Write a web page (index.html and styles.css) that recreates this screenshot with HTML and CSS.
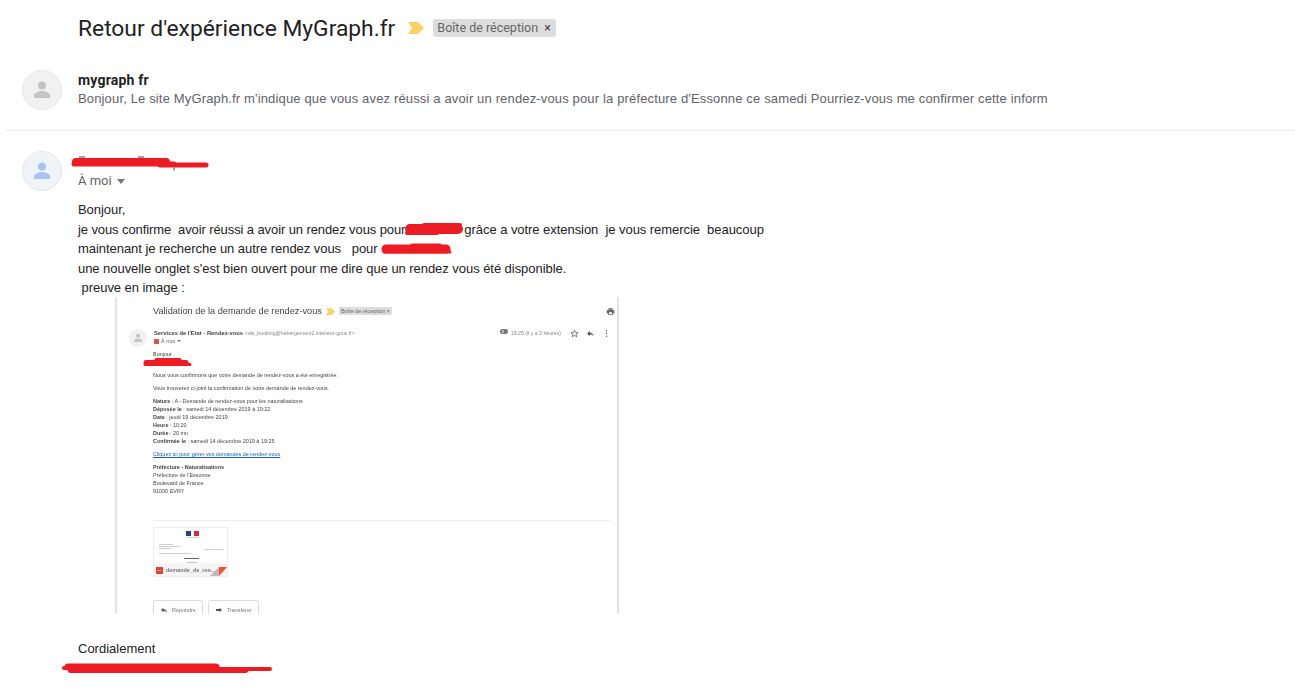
FILE: index.html
```html
<!DOCTYPE html>
<html lang="fr">
<head>
    <meta charset="UTF-8">
    <title>Retour d'expérience MyGraph.fr</title>
    <link rel="stylesheet" href="styles.css">
</head>
<body>
    <div class="subject">
        <h1>Retour d'expérience MyGraph.fr</h1>
        <svg class="marker" width="16" height="12" viewBox="0 0 16 12"><path d="M0 0h10l6 6-6 6H0l4-6z"/></svg>
        <span class="chip">Boîte de réception <b>×</b></span>
    </div>

    <div class="msg-row collapsed">
        <div class="avatar">
            <svg width="20" height="20" viewBox="0 0 20 20"><circle cx="10" cy="5.5" r="4"/><path d="M2 18v-2.500c0-3 5-4.500 8-4.500s8 1.500 8 4.500V18z"/></svg>
        </div>
        <div class="msg-head">
            <div class="sender">mygraph fr</div>
            <div class="snippet">Bonjour, Le site MyGraph.fr m'indique que vous avez réussi a avoir un rendez-vous pour la préfecture d'Essonne ce samedi Pourriez-vous me confirmer cette inform</div>
        </div>
    </div>

    <div class="msg-row open">
        <div class="avatar blue">
            <svg width="20" height="20" viewBox="0 0 20 20"><circle cx="10" cy="5.500" r="4"/><path d="M2 18v-2.500c0-3 5-4.500 8-4.500s8 1.500 8 4.500V18z"/></svg>
        </div>
        <div class="msg-head">
            <div class="sender">&nbsp;</div>
            <div class="to">À moi <i class="caret"></i></div>
        </div>
    </div>

    <div class="msg-body">
        <div class="line">Bonjour,</div>
        <div class="line"><span class="tight">je vous confirme  avoir réussi a avoir un rendez vous pour</span><span class="gap gap-a"></span>grâce a votre extension  je vous remercie  beaucoup</div>
        <div class="line">maintenant je recherche un autre rendez vous   pour <span class="gap gap-b"></span></div>
        <div class="line">une nouvelle onglet s'est bien ouvert pour me dire que un rendez vous été disponible.</div>
        <div class="line"> preuve en image :</div>
    </div>

    <div class="shot">
        <div class="shot-title">
            <h2>Validation de la demande de rendez-vous</h2>
            <svg width="9" height="7" viewBox="0 0 16 12" class="marker"><path d="M0 0h10l6 6-6 6H0l4-6z"/></svg>
            <span class="shot-chip">Boîte de réception ×</span>
            <svg class="print" width="9" height="9" viewBox="0 0 24 24"><path d="M19 8H5a3 3 0 0 0-3 3v6h4v4h12v-4h4v-6a3 3 0 0 0-3-3zm-3 11H8v-5h8zM18 3H6v4h12z"/></svg>
        </div>
        <div class="shot-head">
            <div class="shot-avatar">
                <svg width="10" height="10" viewBox="0 0 20 20"><circle cx="10" cy="5.500" r="4"/><path d="M2 18v-2.500c0-3 5-4.500 8-4.500s8 1.500 8 4.500V18z"/></svg>
            </div>
            <div class="shot-who">
                <div><b class="shot-sender">Services de l'Etat - Rendez-vous</b> <span class="grey">&lt;ide_booking@hebergement2.interieur-gouv.fr&gt;</span></div>
                <div class="shot-to"><i class="flag"></i>À moi <i class="caret small"></i></div>
            </div>
            <div class="shot-meta">
                <svg width="8" height="5" viewBox="0 0 16 10"><rect width="16" height="10" rx="5" fill="#777"/><rect x="5" y="2" width="2" height="6" fill="#fff"/></svg>
                <span class="grey">19:25 (il y a 3 heures)</span>
                <svg width="9" height="9" viewBox="0 0 24 24" class="star"><path d="M12 3l2.700 6.300 6.800.6-5.200 4.500 1.600 6.700L12 17l-5.900 3.600 1.600-6.700L2.500 9.900l6.800-.6z"/></svg>
                <svg width="9" height="9" viewBox="0 0 24 24"><path d="M10 9V5l-7 7 7 7v-4.100c5 0 8.500 1.600 11 5.100-1-5-4-10-11-11z"/></svg>
                <svg width="9" height="9" viewBox="0 0 24 24"><circle cx="12" cy="5" r="2"/><circle cx="12" cy="12" r="2"/><circle cx="12" cy="19" r="2"/></svg>
            </div>
        </div>
        <div class="shot-text">
            <div>Bonjour</div>
            <div class="shot-blank">&nbsp;</div>
            <p>Nous vous confirmons que votre demande de rendez-vous a été enregistrée.</p>
            <p>Vous trouverez ci-joint la confirmation de votre demande de rendez-vous.</p>
            <p><b>Nature</b> : A - Demande de rendez-vous pour les naturalisations<br>
            <b>Déposée le</b> : samedi 14 décembre 2019 à 19:22<br>
            <b>Date</b> : jeudi 19 décembre 2019<br>
            <b>Heure</b> : 10:20<br>
            <b>Durée</b> : 20 mn<br>
            <b>Confirmée le</b> : samedi 14 décembre 2019 à 19:25</p>
            <p><a href="#">Cliquez ici pour gérer vos demandes de rendez-vous</a></p>
            <p><b>Préfecture - Naturalisations</b><br>
            Préfecture de l'Essonne<br>
            Boulevard de France<br>
            91000 EVRY</p>
        </div>
        <div class="shot-line"></div>
        <div class="attachment">
            <svg class="doc" width="73" height="35" viewBox="0 0 73 35">
                <rect x="32" y="3" width="5" height="5" fill="#22408f"/>
                <rect x="40" y="3" width="5" height="5" fill="#e0243a"/>
                <g fill="#bbb">
                    <rect x="33" y="9" width="12" height=".7"/>
                    <rect x="5" y="16" width="14" height=".7"/>
                    <rect x="5" y="18" width="21" height=".7"/>
                    <rect x="5" y="20" width="12" height=".7"/>
                    <rect x="50" y="21" width="19" height=".7"/>
                    <rect x="5" y="25" width="32" height=".7"/>
                </g>
                <rect x="30" y="30" width="15" height="1" fill="#666"/>
                <rect x="33" y="34" width="10" height=".7" fill="#aaa"/>
            </svg>
            <div class="att-name"><span class="pdf">PDF</span><span>demande_de_ren...</span></div>
            <svg class="fold" width="17" height="10" viewBox="0 0 17 10"><path d="M0 10l9-9v9z" fill="#bbb"/><path d="M9 1h8l-8 9z" fill="#f4532a"/></svg>
        </div>
        <div class="shot-buttons">
            <span class="shot-btn"><svg width="8" height="8" viewBox="0 0 24 24"><path d="M10 9V5l-7 7 7 7v-4.100c5 0 8.500 1.600 11 5.100-1-5-4-10-11-11z"/></svg>Répondre</span>
            <span class="shot-btn"><svg width="8" height="8" viewBox="0 0 24 24"><path d="M14 9V5l7 7-7 7v-4H3V9z"/></svg>Transférer</span>
        </div>
    </div>

    <div class="closing">Cordialement</div>

    <svg class="scribbles" width="1295" height="688" viewBox="0 0 1295 688">
        <g class="peek">
            <path d="M79 157h6M138 157h6M174 170.500v-3"/>
        </g>
        <g class="red">
            <path stroke-width="8" d="M76 162h90"/>
            <path stroke-width="5" d="M74 164h100"/>
            <path stroke-width="5" d="M160 165h46"/>
            <path stroke-width="10" d="M410 229h48"/>
            <path stroke-width="4" d="M407 233h30M424 225h36"/>
            <path stroke-width="9" d="M386 249h60"/>
            <path stroke-width="3" d="M384 252h66M412 245h28"/>
            <path stroke-width="5" d="M146 362.500h40"/>
            <path stroke-width="3" d="M145 364.500h45M156 359.500h24"/>
            <path stroke-width="7" d="M68 667h148"/>
            <path stroke-width="4" d="M64 668h120M70 671h176M180 669h90"/>
        </g>
    </svg>
</body>
</html>
```

FILE: styles.css
```css
* {
    box-sizing: border-box;
}
html, body {
    height: 100%;
}
body {
    margin: 0;
    overflow: hidden;
    position: relative;
    background: white;
    color: #222;
    font-family: "Liberation Sans", Arial, sans-serif;
    font-size: 13px;
}
.subject {
    display: flex;
    align-items: center;
    height: 56px;
    padding-left: 78px;
}
.subject h1 {
    margin: 0;
    font-family: Roboto, sans-serif;
    font-size: 22.800px;
    font-weight: 400;
    color: #222;
}
.marker {
    margin-left: 13px;
    fill: #fad165;
}
.chip {
    margin-left: 9px;
    padding: 0 5px 0 4px;
    height: 18px;
    line-height: 18px;
    border-radius: 3px;
    background: #ddd;
    color: #666;
    font-family: Roboto, sans-serif;
    font-size: 12.500px;
}
.chip b {
    margin-left: 3px;
    font-weight: 400;
    color: #444;
}
.msg-row {
    display: flex;
    padding-left: 22px;
}
.msg-row.collapsed {
    height: 75px;
    margin-left: 6px;
    padding-left: 16px;
    padding-top: 14px;
    border-bottom: 1px solid #e8e8e8;
}
.msg-row.open {
    padding-top: 20px;
    height: 66px;
}
.avatar {
    display: flex;
    align-items: center;
    justify-content: center;
    width: 40px;
    height: 40px;
    border-radius: 50%;
    background: #f1f1f1;
    border: 1px solid #e6e6e6;
    fill: #c4c4c4;
}
.avatar.blue {
    background: #f0f3f8;
    fill: #a9c4f0;
}
.msg-head {
    margin-left: 16px;
}
.sender {
    font-family: Roboto, sans-serif;
    font-weight: 700;
    font-size: 14px;
    letter-spacing: .2px;
    line-height: 20px;
}
.snippet, .to {
    line-height: 18px;
    color: #5f6368;
}
.snippet {
    letter-spacing: .15px;
}
.to {
    margin-top: 1px;
    font-family: Roboto, sans-serif;
    font-size: 13px;
    display: flex;
    align-items: center;
    gap: 5px;
}
.caret {
    width: 0;
    height: 0;
    border: 4.500px solid transparent;
    border-top: 5px solid #777;
    border-bottom: 0;
}
.msg-body {
    margin-left: 78px;
    line-height: 19.500px;
    height: 100px;
    padding-top: 3px;
    letter-spacing: -.05px;
}
.line {
    white-space: pre-wrap;
}
.tight {
    letter-spacing: -.1px;
}
.gap {
    display: inline-block;
}
.gap-a {
    width: 59px;
}
.gap-b {
    width: 70px;
}

/* la capture dans le message */
.shot {
    width: 504px;
    height: 317px;
    margin-left: 115px;
    padding: 0 0 0 36px;
    border-left: 2px solid #e4e4e4;
    border-right: 2px solid #e4e4e4;
    overflow: hidden;
    font-size: 5.450px;
    line-height: 8px;
    color: #444;
    filter: blur(.35px);
}
.shot-title {
    display: flex;
    align-items: center;
    height: 28px;
    padding-right: 2px;
}
.shot-title h2 {
    margin: 0;
    font-size: 9.200px;
    font-weight: 400;
    color: #444;
}
.shot-title .marker {
    margin-left: 4px;
}
.shot-chip {
    margin-left: 4px;
    padding: 0 2px;
    background: #ddd;
    color: #666;
    border-radius: 1px;
}
.print {
    margin-left: auto;
    fill: #666;
}
.shot-head {
    display: flex;
    height: 22px;
    margin-left: -24px;
    padding-right: 2px;
    padding-top: 4px;
}
.shot-avatar {
    display: flex;
    align-items: center;
    justify-content: center;
    width: 18px;
    height: 18px;
    border-radius: 50%;
    background: #f1f1f1;
    fill: #c4c4c4;
}
.shot-who {
    margin-left: 7px;
}
.shot-sender {
    font-size: 5.800px;
}
.shot-to {
    display: flex;
    align-items: center;
    gap: 2px;
    color: #666;
}
.flag {
    width: 5px;
    height: 5px;
    background: #d9534f;
}
.caret.small {
    border-width: 2px;
    border-top-width: 2px;
    border-bottom: 0;
}
.grey {
    color: #888;
    font-size: 5.200px;
}
.shot-meta {
    display: flex;
    align-items: flex-start;
    gap: 3px;
    margin-left: auto;
    fill: #555;
}
.shot-meta .star {
    margin-left: 6px;
    margin-right: 4px;
    fill: none;
    stroke: #555;
    stroke-width: 2;
}
.shot-meta svg + svg {
    margin-right: 4px;
}
.shot-text {
    padding-top: 3px;
}
.shot-blank {
    height: 8px;
}
.shot-text p {
    margin: 5px 0 0;
}
.shot-text a {
    color: #1a5fc4;
}
.shot-line {
    height: 1px;
    margin: 25px 6px 0 0;
    background: #eee;
}
.attachment {
    position: relative;
    width: 75px;
    height: 50px;
    margin-top: 6px;
    border: 1px solid #eee;
    overflow: hidden;
}
.doc {
    display: block;
}
.att-name {
    display: flex;
    align-items: center;
    gap: 3px;
    height: 14px;
    padding-left: 2px;
    background: #f5f5f5;
    color: #777;
    font-weight: 700;
}
.pdf {
    width: 7px;
    height: 7px;
    background: #e8402f;
    color: white;
    font-size: 2px;
    line-height: 7px;
    text-align: center;
}
.fold {
    position: absolute;
    right: 0;
    bottom: 0;
}
.shot-buttons {
    display: flex;
    gap: 5px;
    margin-top: 23px;
}
.shot-btn {
    display: flex;
    align-items: center;
    gap: 4px;
    height: 20px;
    padding: 0 6px;
    border: 1px solid #ddd;
    border-radius: 2px;
    color: #777;
    fill: #555;
}
.closing {
    margin: 27px 0 0 78px;
    line-height: 16px;
}
.scribbles {
    position: absolute;
    left: 0;
    top: 0;
    pointer-events: none;
}
.scribbles .peek {
    fill: none;
    stroke: #444;
    stroke-width: 1;
}
.scribbles .red {
    fill: none;
    stroke: #ed1c24;
    stroke-linecap: round;
}
```
